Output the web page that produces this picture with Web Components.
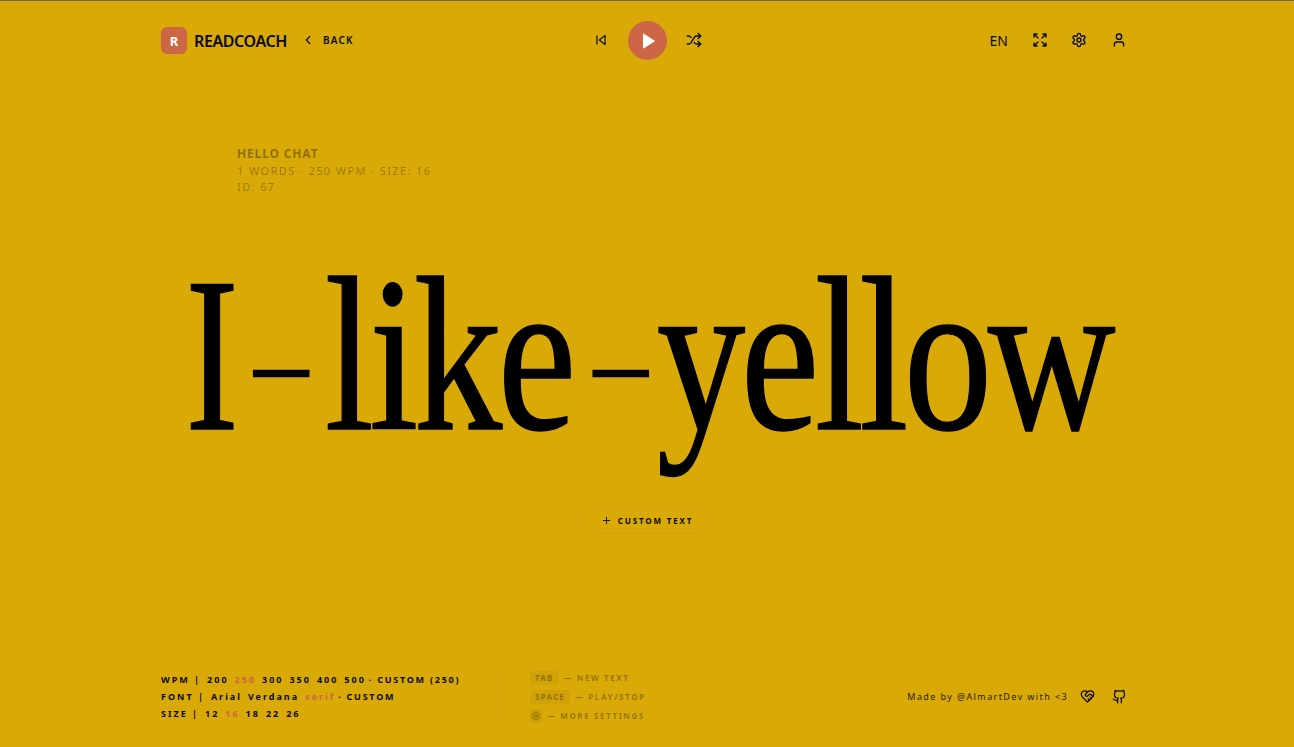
<!DOCTYPE html>
<html lang="en">
<head>
<meta charset="utf-8">
<title>ReadCoach</title>
<style>
  html, body { margin: 0; padding: 0; height: 100%; background: #d9a907; }
  body { font-family: "Noto Sans", sans-serif; color: #0a0a0a; overflow: hidden; }
</style>
</head>
<body>
<rc-app>
  <rc-header slot="header"></rc-header>
  <rc-meta slot="meta" title-text="Hello chat" info="1 words · 250 wpm · size: 16" ident="ID: 67"></rc-meta>
  <rc-word slot="word" text="I-like-yellow"></rc-word>
  <rc-custom-button slot="action">Custom text</rc-custom-button>
  <rc-footer slot="footer"></rc-footer>
</rc-app>

<script>
const ICONS = {
  back: '<path d="m15 18-6-6 6-6"/>',
  skip: '<polygon points="19 20 9 12 19 4 19 20"/><line x1="5" x2="5" y1="19" y2="5"/>',
  shuffle: '<path d="m18 14 4 4-4 4"/><path d="m18 2 4 4-4 4"/><path d="M2 18h1.973a4 4 0 0 0 3.3-1.7l5.454-8.6a4 4 0 0 1 3.3-1.7H22"/><path d="M2 6h1.972a4 4 0 0 1 3.6 2.2"/><path d="M22 18h-6.041a4 4 0 0 1-3.3-1.8l-.359-.45"/>',
  expand: '<path d="m21 21-6-6m6 6v-4.8m0 4.8h-4.8"/><path d="M3 16.2V21m0 0h4.8M3 21l6-6"/><path d="M21 7.8V3m0 0h-4.8M21 3l-6 6"/><path d="M3 7.8V3m0 0h4.8M3 3l6 6"/>',
  settings: '<path d="M12.22 2h-.44a2 2 0 0 0-2 2v.18a2 2 0 0 1-1 1.73l-.43.25a2 2 0 0 1-2 0l-.15-.08a2 2 0 0 0-2.73.73l-.22.38a2 2 0 0 0 .73 2.73l.15.1a2 2 0 0 1 1 1.72v.51a2 2 0 0 1-1 1.74l-.15.09a2 2 0 0 0-.73 2.73l.22.38a2 2 0 0 0 2.73.73l.15-.08a2 2 0 0 1 2 0l.43.25a2 2 0 0 1 1 1.73V20a2 2 0 0 0 2 2h.44a2 2 0 0 0 2-2v-.18a2 2 0 0 1 1-1.73l.43-.25a2 2 0 0 1 2 0l.15.08a2 2 0 0 0 2.73-.73l.22-.39a2 2 0 0 0-.73-2.73l-.15-.08a2 2 0 0 1-1-1.74v-.5a2 2 0 0 1 1-1.74l.15-.09a2 2 0 0 0 .73-2.73l-.22-.38a2 2 0 0 0-2.73-.73l-.15.08a2 2 0 0 1-2 0l-.43-.25a2 2 0 0 1-1-1.73V4a2 2 0 0 0-2-2z"/><circle cx="12" cy="12" r="3"/>',
  user: '<path d="M19 21v-2a4 4 0 0 0-4-4H9a4 4 0 0 0-4 4v2"/><circle cx="12" cy="7" r="4"/>',
  plus: '<path d="M5 12h14"/><path d="M12 5v14"/>',
  heart: '<path d="M19 14c1.49-1.46 3-3.21 3-5.5A5.5 5.5 0 0 0 16.5 3c-1.76 0-3 .5-4.5 2-1.5-1.5-2.74-2-4.5-2A5.5 5.5 0 0 0 2 8.5c0 2.3 1.5 4.05 3 5.5l7 7Z"/><path d="M12 5 9.04 7.96a2.17 2.17 0 0 0 0 3.08c.82.82 2.13.85 3 .07l2.07-1.9a2.82 2.82 0 0 1 3.79 0l2.96 2.66"/><path d="m18 15-2-2"/><path d="m15 18-2-2"/>',
  github: '<path d="M15 22v-4a4.8 4.8 0 0 0-1-3.5c3 0 6-2 6-5.5.08-1.25-.27-2.48-1-3.5.28-1.15.28-2.35 0-3.5 0 0-1 0-3 1.5-2.64-.5-5.36-.5-8 0C6 2 5 2 5 2c-.3 1.15-.3 2.35 0 3.5A5.403 5.403 0 0 0 4 9c0 3.5 3 5.5 6 5.5-.39.49-.68 1.05-.85 1.65-.17.6-.22 1.23-.15 1.85v4"/><path d="M9 18c-4.51 2-5-2-7-2"/>'
};

class RcIcon extends HTMLElement {
  connectedCallback() {
    const size = this.getAttribute('size') || 16;
    const stroke = this.getAttribute('stroke') || 2;
    this.attachShadow({ mode: 'open' }).innerHTML = `
      <style>
        :host { display: inline-flex; width: ${size}px; height: ${size}px; flex: none; }
        svg { width: 100%; height: 100%; display: block; }
      </style>
      <svg viewBox="0 0 24 24" fill="none" stroke="currentColor" stroke-width="${stroke}" stroke-linecap="round" stroke-linejoin="round">${ICONS[this.getAttribute('name')]}</svg>`;
  }
}
customElements.define('rc-icon', RcIcon);

class RcApp extends HTMLElement {
  constructor() {
    super();
    this.attachShadow({ mode: 'open' }).innerHTML = `
      <style>
        :host { display: flex; flex-direction: column; height: 100vh; box-sizing: border-box; border-top: 1px solid #6e6e5a; }
        .main { flex: 1; display: flex; flex-direction: column; align-items: center; min-height: 0; }
        .meta { align-self: stretch; padding: 65px 0 0 237px; }
        .action { margin-top: 30px; }
      </style>
      <slot name="header"></slot>
      <div class="main">
        <div class="meta"><slot name="meta"></slot></div>
        <slot name="word"></slot>
        <div class="action"><slot name="action"></slot></div>
      </div>
      <slot name="footer"></slot>`;
  }
}
customElements.define('rc-app', RcApp);

class RcHeader extends HTMLElement {
  constructor() {
    super();
    this.attachShadow({ mode: 'open' }).innerHTML = `
      <style>
        :host { display: grid; grid-template-columns: 1fr auto 1fr; align-items: center; height: 79px; padding: 0 167px 0 161px; }
        .left, .center, .right { display: flex; align-items: center; }
        .logo { width: 26px; height: 27px; border-radius: 6px; background: #cc6644; color: #fff; font-size: 13px; font-weight: 700; display: flex; align-items: center; justify-content: center; }
        .name { font-size: 16px; font-weight: 600; letter-spacing: -0.4px; margin-left: 7px; }
        .back { display: flex; align-items: center; gap: 8px; margin-left: 14px; margin-bottom: 1px; font-size: 10px; font-weight: 600; letter-spacing: 1.2px; }
        .center { gap: 20px; margin-left: 7px; }
        .center rc-icon { margin-bottom: 1px; }
        .play { width: 39px; height: 39px; border-radius: 50%; background: #cc6644; color: #fff; display: flex; align-items: center; justify-content: center; }
        .play svg { width: 16px; height: 16px; display: block; margin-left: 2px; }
        .right { justify-content: flex-end; gap: 24px; margin-bottom: 1px; }
        .right rc-icon[name=expand] { margin-right: -1px; margin-left: 1px; }
        .lang { font-size: 14px; margin-right: -1px; }
      </style>
      <div class="left">
        <div class="logo">R</div>
        <div class="name">READCOACH</div>
        <div class="back"><rc-icon name="back" size="14"></rc-icon><span>BACK</span></div>
      </div>
      <div class="center">
        <rc-icon name="skip" size="14" stroke="2"></rc-icon>
        <div class="play"><svg viewBox="0 0 16 16"><path d="M3 1.2v13.6a.6.6 0 0 0 .9.5l10.6-6.8a.6.6 0 0 0 0-1L3.900.7A.6.6 0 0 0 3 1.200z" fill="currentColor"/></svg></div>
        <rc-icon name="shuffle" size="16" style="margin-left:-1px"></rc-icon>
      </div>
      <div class="right">
        <span class="lang">EN</span>
        <rc-icon name="expand" size="16"></rc-icon>
        <rc-icon name="settings" size="16"></rc-icon>
        <rc-icon name="user" size="16"></rc-icon>
      </div>`;
  }
}
customElements.define('rc-header', RcHeader);

class RcMeta extends HTMLElement {
  connectedCallback() {
    this.attachShadow({ mode: 'open' }).innerHTML = `
      <style>
        :host { display: block; color: rgba(0,0,0,.3); font-size: 11px; line-height: 17px; letter-spacing: 1.4px; text-transform: uppercase; }
        .t { font-size: 12px; letter-spacing: .85px; font-weight: 700; color: rgba(0,0,0,.36); margin-top: 1px; line-height: 16px; }
        .i { margin-top: -1px; }
      </style>
      <div class="t">${this.getAttribute('title-text')}</div>
      <div>${this.getAttribute('info')}</div>
      <div class="i">${this.getAttribute('ident')}</div>`;
  }
}
customElements.define('rc-meta', RcMeta);

class RcWord extends HTMLElement {
  connectedCallback() {
    const parts = this.getAttribute('text').split('-');
    const html = parts.map(p => `<span class="${p.length === 1 ? 'cap' : ''}">${p}</span>`).join('<span class="h">-</span>');
    this.attachShadow({ mode: 'open' }).innerHTML = `
      <style>
        :host { display: block; margin-top: 32px; font-family: "Liberation Serif", serif; font-size: 230px; line-height: 250px; color: #000; white-space: nowrap; text-align: center; }
        .w { display: inline-block; letter-spacing: -6px; -webkit-text-stroke: 1.5px #000; transform-origin: 50% 202px; transform: scale(.77, .955); }
        .cap { display: inline-block; transform: scaleX(.9); }
        /* the hyphen of the reference font is longer and much thinner */
        .h { display: inline-block; margin: 0 24.4px 0 18.8px; transform-origin: 50% 148px; transform: translateY(-3px) scale(1.2, .42); }
        .h:nth-of-type(4) { margin: 0 15.3px 0 24.6px; }
      </style>
      <div class="w">${html}</div>`;
  }
}
customElements.define('rc-word', RcWord);

class RcCustomButton extends HTMLElement {
  constructor() {
    super();
    this.attachShadow({ mode: 'open' }).innerHTML = `
      <style>
        :host { display: inline-flex; align-items: center; gap: 6px; height: 25px; padding: 0 19px; border: 1px solid rgba(0,0,0,.03); border-radius: 14px; font-size: 8px; font-weight: 700; letter-spacing: 1.85px; text-transform: uppercase; }
      </style>
      <rc-icon name="plus" size="11"></rc-icon><slot></slot>`;
  }
}
customElements.define('rc-custom-button', RcCustomButton);

class RcOptions extends HTMLElement {
  connectedCallback() {
    const items = this.getAttribute('items').split(',').map(v => {
      const on = v.startsWith('*');
      return `<span class="${on ? 'on' : ''}">${on ? v.slice(1) : v}</span>`;
    }).join('');
    const extra = this.getAttribute('extra');
    this.attachShadow({ mode: 'open' }).innerHTML = `
      <style>
        :host { display: flex; align-items: center; height: 17px; gap: 6px; font-size: 9px; font-weight: 700; letter-spacing: 2px; white-space: nowrap; }
        .on { color: #cc6644; }
        .x { margin-left: -3px; letter-spacing: 1.75px; }
      </style>
      <span>${this.getAttribute('label')} |</span>
      ${items}
      ${extra ? `<span class="x">· ${extra}</span>` : ''}`;
  }
}
customElements.define('rc-options', RcOptions);

class RcShortcut extends HTMLElement {
  constructor() {
    super();
    this.attachShadow({ mode: 'open' }).innerHTML = `
      <style>
        :host { display: flex; align-items: center; gap: 5px; height: 19px; color: rgba(0,0,0,.33); font-size: 8px; font-weight: 700; letter-spacing: 1.6px; white-space: nowrap; }
        .k { display: flex; align-items: center; height: 14px; padding: 0 5px; background: rgba(0,0,0,.04); border-radius: 2px; letter-spacing: 1.2px; }
        ::slotted(rc-icon) { margin: 0 -4px; }
      </style>
      <span class="k"><slot name="key"></slot></span><slot></slot>`;
  }
}
customElements.define('rc-shortcut', RcShortcut);

class RcFooter extends HTMLElement {
  constructor() {
    super();
    this.attachShadow({ mode: 'open' }).innerHTML = `
      <style>
        :host { display: flex; align-items: center; height: 85px; padding: 0 167px 16px 161px; box-sizing: border-box; }
        .opts { width: 338px; flex: none; }
        .keys { padding-left: 30px; border-left: 1px solid rgba(0,0,0,.025); }
        .made { margin-left: auto; display: flex; align-items: center; gap: 13px; font-size: 9px; letter-spacing: 1.4px; color: #2a2000; }
        .made rc-icon { color: #0a0a0a; }
        .made rc-icon[name=heart] { margin-left: -1px; }
        .made rc-icon[name=github] { margin-left: 4px; }
      </style>
      <div class="opts">
        <rc-options label="WPM" items="200,*250,300,350,400,500" extra="CUSTOM (250)"></rc-options>
        <rc-options label="FONT" items="Arial,Verdana,*serif" extra="CUSTOM"></rc-options>
        <rc-options label="SIZE" items="12,*16,18,22,26"></rc-options>
      </div>
      <div class="keys">
        <rc-shortcut><span slot="key">TAB</span>— NEW TEXT</rc-shortcut>
        <rc-shortcut><span slot="key">SPACE</span>— PLAY/STOP</rc-shortcut>
        <rc-shortcut><rc-icon slot="key" name="settings" size="10"></rc-icon>— MORE SETTINGS</rc-shortcut>
      </div>
      <div class="made">
        <span>Made by @AlmartDev with &lt;3</span>
        <rc-icon name="heart" size="15"></rc-icon>
        <rc-icon name="github" size="15"></rc-icon>
      </div>`;
  }
}
customElements.define('rc-footer', RcFooter);
</script>
</body>
</html>
